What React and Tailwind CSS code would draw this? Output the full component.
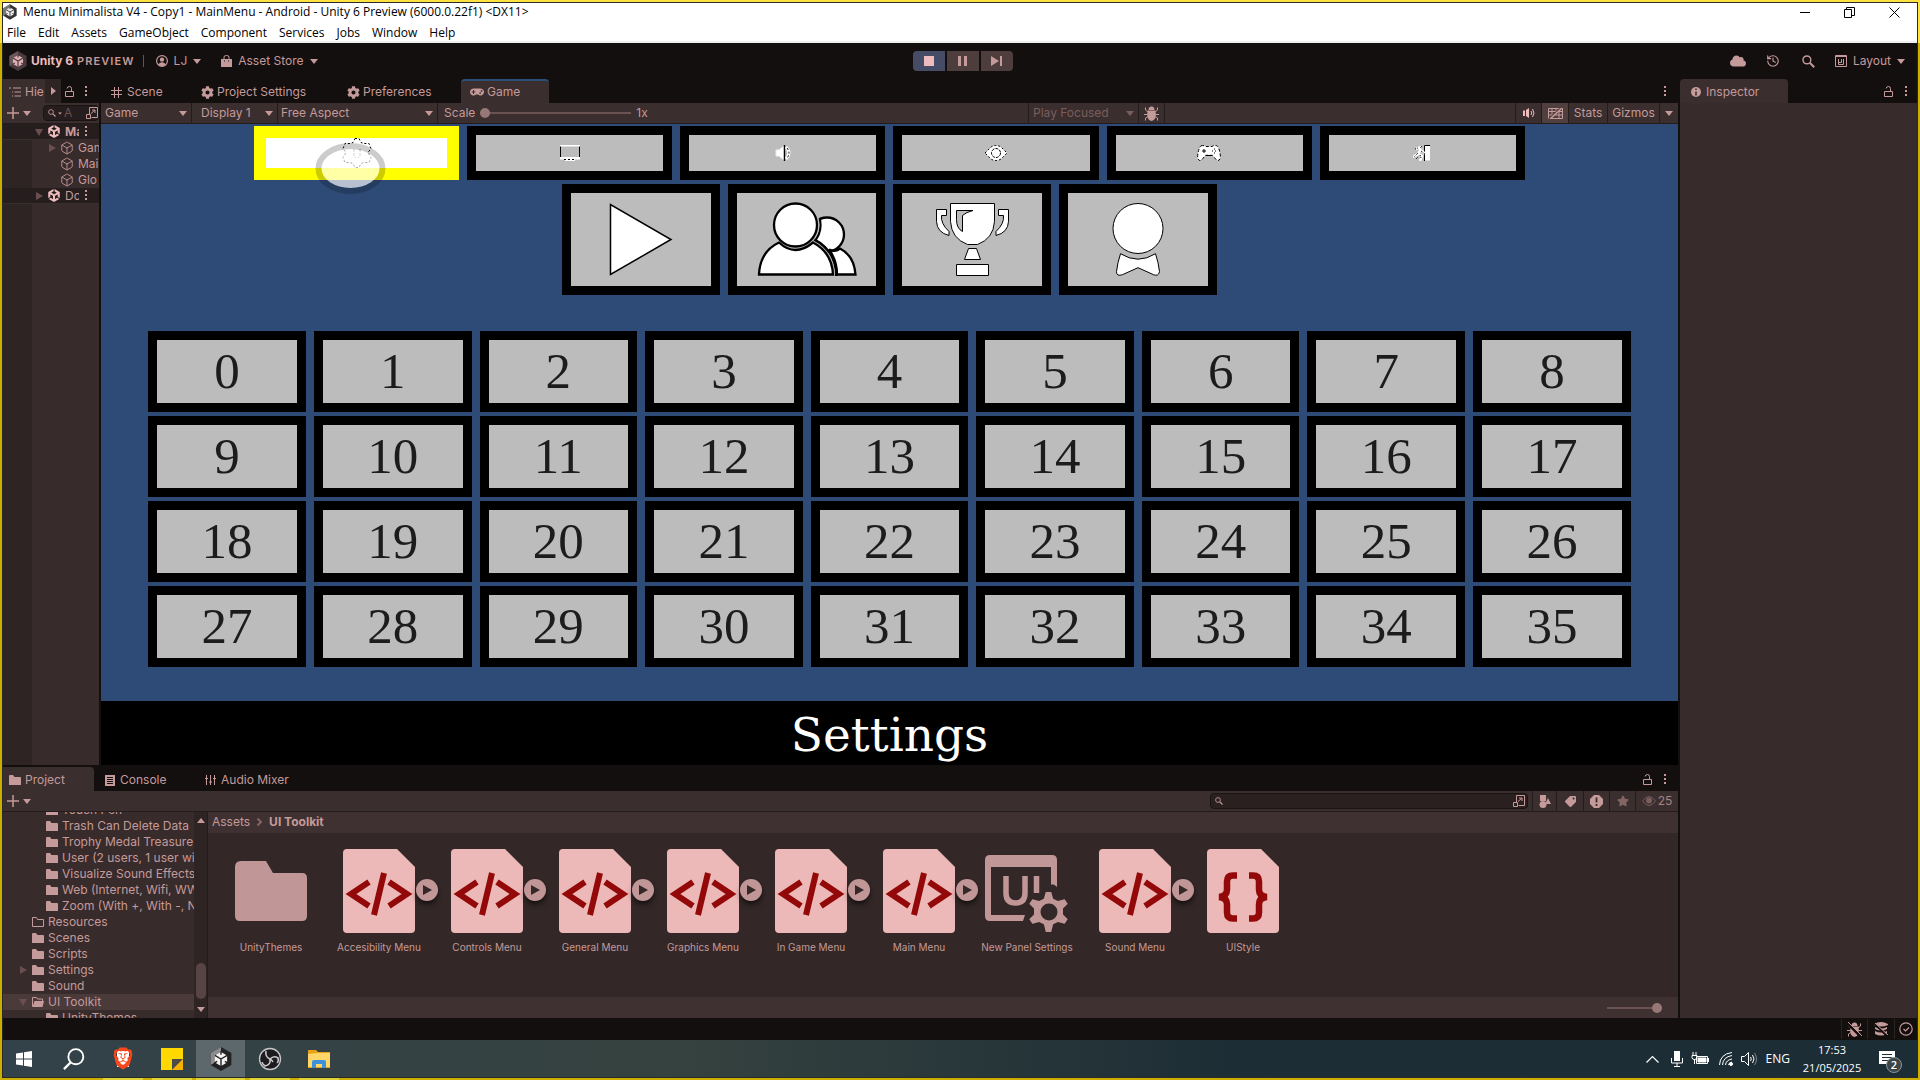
import React from "react";
import { SiBrave, SiUnity } from "react-icons/si";
import { FaCloud, FaCog, FaGamepad, FaStar, FaTag } from "react-icons/fa";
import { Box, History } from "lucide-react";

const menus = ["File", "Edit", "Assets", "GameObject", "Component", "Services", "Jobs", "Window", "Help"];

const folders = [
  { name: "Touch Pen", depth: 2 },
  { name: "Trash Can Delete Data", depth: 2 },
  { name: "Trophy Medal Treasure", depth: 2 },
  { name: "User (2 users, 1 user wi", depth: 2 },
  { name: "Visualize Sound Effects", depth: 2 },
  { name: "Web (Internet, Wifi, WW", depth: 2 },
  { name: "Zoom (With +, With -, N", depth: 2 },
  { name: "Resources", depth: 1, empty: true },
  { name: "Scenes", depth: 1 },
  { name: "Scripts", depth: 1 },
  { name: "Settings", depth: 1, arrow: "right" },
  { name: "Sound", depth: 1 },
  { name: "UI Toolkit", depth: 1, arrow: "down", open: true },
  { name: "UnityThemes", depth: 2 },
];

const assets = [
  { name: "UnityThemes", type: "folder" },
  { name: "Accesibility Menu", type: "uxml" },
  { name: "Controls Menu", type: "uxml" },
  { name: "General Menu", type: "uxml" },
  { name: "Graphics Menu", type: "uxml" },
  { name: "In Game Menu", type: "uxml" },
  { name: "Main Menu", type: "uxml" },
  { name: "New Panel Settings", type: "panel" },
  { name: "Sound Menu", type: "uxml" },
  { name: "UIStyle", type: "uss" },
];

function Caret({ className = "" }) {
  return (
    <svg className={`w-2 h-[5px] shrink-0 ${className}`} viewBox="0 0 8 5" fill="currentColor">
      <path d="M0 0h8L4 5z" />
    </svg>
  );
}

function Kebab() {
  return (
    <svg className="w-[3px] h-[11px] shrink-0" viewBox="0 0 3 11" fill="currentColor">
      <path d="M0 0h2v2H0zM0 4h2v2H0zM0 8h2v2H0z" />
    </svg>
  );
}

function Lock() {
  return (
    <svg className="w-[9px] h-[11px] shrink-0" viewBox="0 0 9 11" fill="none" stroke="currentColor">
      <path d="M.5 5.500h8v5h-8zM6.500 5.500v-3q0-2-2-2t-2.500 2" />
    </svg>
  );
}

function Arrow({ down }) {
  return (
    <svg className="w-2 h-2 shrink-0 text-[#6b4f4f]" viewBox="0 0 8 8" fill="currentColor">
      {down ? <path d="M0 1h8L4 8z" /> : <path d="M1 0l7 4-7 4z" />}
    </svg>
  );
}

function Magnifier({ className }) {
  return (
    <svg className={`shrink-0 ${className}`} viewBox="0 0 12 12" fill="none" stroke="currentColor" strokeWidth="1.300">
      <circle cx="4.500" cy="4.500" r="3.600" />
      <path d="M7.200 7.200L11.300 11.300" strokeWidth="1.800" />
    </svg>
  );
}

function OpenWindow() {
  return (
    <svg className="w-3 h-3 shrink-0" viewBox="0 0 12 12" fill="none" stroke="currentColor">
      <path d="M3.500 7V.5h8v10H5.500M.5 7.500h4v4h-4zM5 6.500L9 3M6 3h3v3" />
    </svg>
  );
}

function FolderIcon({ empty, open }) {
  return (
    <svg className="w-3 h-[10px] shrink-0" viewBox="0 0 12 10">
      {empty ? (
        <path d="M.5 9.500v-9h4l1 2h6v7z" fill="none" stroke="currentColor" />
      ) : open ? (
        <>
          <path d="M.5 9.500v-9h4l1 1.500h5v2" fill="none" stroke="currentColor" />
          <path d="M2.500 4H12l-1.500 6H.5z" fill="currentColor" />
        </>
      ) : (
        <path d="M0 10V1q0-1 1-1h3l1.500 2H11q1 0 1 1v7z" fill="currentColor" />
      )}
    </svg>
  );
}

function PlusMenu() {
  return (
    <button aria-label="Create" className="flex items-center gap-1 pl-1">
      <svg className="w-3 h-3" viewBox="0 0 12 12" stroke="currentColor" strokeWidth="1.500">
        <path d="M6 0v12M0 6h12" />
      </svg>
      <Caret />
    </button>
  );
}

function UnityCube({ className, dark, light, face }) {
  return (
    <svg className={className} viewBox="0 0 20 22">
      <path d="M10 0l9.500 5.500v11L10 22 .5 16.500v-11z" fill={dark} />
      <path d="M10 0L.5 5.500v11L10 11z" fill={light} />
      <path d="M10 4.500l5.600 3.200v6.600L10 17.500l-5.600-3.200V7.700z" fill={face} />
      <path d="M10 11v6.500M10 11L4.400 7.700M10 11l5.600-3.300M10 4v3M4 14.500l2.500-1.400M16 14.500l-2.500-1.400" stroke={dark} strokeWidth="1.300" />
    </svg>
  );
}

function Dropdown({ label, value, className }) {
  return (
    <label className={`relative flex items-center h-full border-r border-[#241c1c] ${className}`}>
      <span className="sr-only">{label}</span>
      <select className="appearance-none w-full h-full bg-transparent outline-none leading-4">
        <option>{value}</option>
      </select>
      <Caret className="absolute right-1 pointer-events-none" />
    </label>
  );
}

function TitleBar() {
  return (
    <header className="bg-white text-black text-xs font-['Open_Sans','Noto_Sans',sans-serif]">
      <div className="h-[18px] flex items-center">
        <UnityCube className="w-[14px] h-4 mr-[6px]" dark="#333333" light="#777777" face="#eeeeee" />
        <span className="flex-1">Menu Minimalista V4 - Copy1 - MainMenu - Android - Unity 6 Preview (6000.0.22f1) &lt;DX11&gt;</span>
        <button aria-label="Minimize" className="w-11 flex justify-center">
          <svg width="10" height="10" stroke="#000"><path d="M0 5.500h10" /></svg>
        </button>
        <button aria-label="Restore" className="w-11 flex justify-center">
          <svg width="11" height="11" fill="none" stroke="#000"><path d="M.5 2.500h7v8h-7zM2.500 2.500v-2h8v8h-3" /></svg>
        </button>
        <button aria-label="Close" className="w-[46px] flex justify-center">
          <svg width="11" height="11" stroke="#000"><path d="M.5.5l10 10M10.500.5l-10 10" /></svg>
        </button>
      </div>
      <nav className="h-[22px] flex items-center gap-3 px-1 pt-1 border-b-2 border-[#f0f0f0]">
        {menus.map((m) => (
          <button key={m}>{m}</button>
        ))}
      </nav>
    </header>
  );
}

function MainToolbar() {
  return (
    <div className="h-9 grid grid-cols-3 items-center pl-[6px] pr-3">
      <div className="flex items-center">
        <UnityCube className="w-[18px] h-5 mr-1" dark="#4a3a40" light="#6a555c" face="#e0b0b2" />
        <span className="font-bold text-[#eebcbc]">Unity 6</span>
        <span className="ml-1 text-[11px] font-semibold tracking-widest">PREVIEW</span>
        <span className="ml-2 w-px h-3 bg-[#6b5252]" />
        <button className="ml-3 flex items-center gap-[6px]">
          <svg className="w-3 h-3" viewBox="0 0 12 12">
            <circle cx="6" cy="6" r="5.400" fill="none" stroke="currentColor" strokeWidth="1.200" />
            <circle cx="6" cy="4.600" r="2.200" fill="currentColor" />
            <path d="M2 9.500q4-4.500 8 0Q6 13 2 9.500z" fill="currentColor" />
          </svg>
          LJ
          <Caret />
        </button>
        <button className="ml-5 flex items-center gap-[6px]">
          <svg className="w-[11px] h-3" viewBox="0 0 11 12">
            <path d="M0 4h11v8H0z" fill="currentColor" />
            <path d="M3 6V2q0-1.500 2.500-1.500T8 2v4" fill="none" stroke="currentColor" />
            <path d="M3 6h1M7 6h1" stroke="#130f0e" />
          </svg>
          Asset Store
          <Caret />
        </button>
      </div>
      <div className="flex justify-center gap-[2px] pl-[11px]">
        <button aria-label="Stop" className="w-8 h-5 rounded-l bg-[#464b66] flex items-center justify-center">
          <span className="w-[10px] h-[10px] bg-[#eebcbc]" />
        </button>
        <button aria-label="Pause" className="w-8 h-5 bg-[#4d3d3d] flex items-center justify-center gap-[3px]">
          <span className="w-[3px] h-[10px] bg-[#c49a9a]" />
          <span className="w-[3px] h-[10px] bg-[#c49a9a]" />
        </button>
        <button aria-label="Step" className="w-8 h-5 rounded-r bg-[#4d3d3d] flex items-center justify-center">
          <svg width="11" height="10" fill="currentColor"><path d="M0 0l8 5-8 5zM9 0h2v10H9z" /></svg>
        </button>
      </div>
      <div className="flex items-center justify-end">
        <button aria-label="Cloud"><FaCloud className="w-4 h-[14px]" /></button>
        <button aria-label="Undo history" className="ml-5"><History size={14} strokeWidth={2} /></button>
        <button aria-label="Search" className="ml-[22px]"><Magnifier className="w-[13px] h-[13px]" /></button>
        <button className="ml-5 flex items-center gap-[6px]">
          <svg className="w-3 h-3" viewBox="0 0 12 12" fill="none" stroke="currentColor">
            <path d="M.5.500h11v11H.5zM.5 1.500h11M3.500 4v5.500h5V4M3.500 7.500h3M6.500 4v3.500" />
          </svg>
          Layout
          <Caret />
        </button>
      </div>
    </div>
  );
}

function UnityRow({ name, down }) {
  return (
    <div className="h-4 flex items-center pl-8 bg-[#261e1e] border-b border-[#3a2d2d]">
      <Arrow down={down} />
      <SiUnity className="w-[14px] h-[13px] ml-1 text-[#eebcbc] shrink-0" />
      <span className={down ? "w-[14px] ml-1 overflow-hidden font-bold" : "w-[14px] ml-1 overflow-hidden"}>{name}</span>
      <span className="ml-[6px]"><Kebab /></span>
    </div>
  );
}

function Hierarchy() {
  return (
    <aside className="w-24 shrink-0 flex flex-col overflow-hidden bg-[#2e2424]">
      <div className="h-6 flex items-center bg-[#130f0e]">
        <div className="h-full w-[42px] bg-[#3b2e2e] flex items-center pl-[6px] pt-[2px] gap-1 overflow-hidden">
          <svg className="w-3 h-[10px] shrink-0" viewBox="0 0 12 10" stroke="currentColor">
            <path d="M0 1h2M4 1h8M3 5h1M5.500 5H12M3 9h1M5.500 9H12" />
          </svg>
          <span>Hie</span>
        </div>
        <button aria-label="Next tab" className="h-full w-4 bg-[#2e2424] flex items-center justify-center">
          <svg width="5" height="8" fill="currentColor"><path d="M0 0l5 4-5 4z" /></svg>
        </button>
        <div className="flex items-center gap-[11px] pl-1"><Lock /><Kebab /></div>
      </div>
      <div className="h-[21px] flex items-center bg-[#3b2e2e] border-b border-[#241c1c]">
        <PlusMenu />
        <label className="ml-3 h-4 w-14 shrink-0 flex items-center rounded bg-[#261e1e] border border-[#1a1414] pl-1">
          <Magnifier className="w-2 h-2" />
          <Caret className="scale-50" />
          <span className="sr-only">Search hierarchy</span>
          <input className="flex-1 min-w-0 bg-transparent outline-none placeholder:text-[#6b5252]" placeholder="A" />
          <OpenWindow />
        </label>
      </div>
      <UnityRow name="Ma" down />
      <ul className="ml-[29px] bg-[#382b2b]">
        {["Gam", "Mai", "Glo"].map((n, i) => (
          <li key={n} className="h-4 flex items-center pl-4 whitespace-nowrap">
            <span className="w-3 shrink-0">{i === 0 && <Arrow />}</span>
            <Box size={14} strokeWidth={1.5} className="mr-1 shrink-0" />
            {n}
          </li>
        ))}
      </ul>
      <UnityRow name="Do" />
      <div className="flex-1 ml-[29px] bg-[#382b2b]" />
    </aside>
  );
}

function PixelIcon({ box, className, children }) {
  return (
    <svg className={className} viewBox={box} fill="#fff" stroke="#000">
      {children}
    </svg>
  );
}

const settingIcons = [
  <PixelIcon key="gear" box="0 0 30 30" className="w-[30px] h-[30px] shrink-0">
    <path
      d="M13 .5h4l2 4 3 1h5l2 5-3 4 3 5-2 5h-5l-3 1-2 4h-4l-2-4-3-1H3l-2-5 3-5-3-4 2-5h5l3-1z"
      strokeDasharray="2 2"
    />
    <path d="M12 11v7l2 2M18 11v7l-2 2" fill="none" stroke="#888" strokeDasharray="3 1" />
  </PixelIcon>,
  <PixelIcon key="display" box="0 0 20 16" className="w-5 h-4">
    <path d="M.5.500h19v13H.5z" fill="#bcbcbc" />
    <path d="M0 0h20v1.500H0zM0 12h20v2.500H0zM5 14h10v2H5z" stroke="none" />
    <path d="M4 14.500h12" strokeDasharray="2 2" />
  </PixelIcon>,
  <PixelIcon key="sound" box="0 0 16 16" className="w-4 h-4">
    <path d="M1 5h3l6-5v16l-6-5H1z" stroke="#eee" />
    <path d="M9.500 0v16" strokeWidth="1.500" />
    <path d="M11 2q6 6 0 12" strokeWidth="3" stroke="#fff" fill="none" />
    <path d="M12 3q4 5 0 10" strokeDasharray="2 2" fill="none" />
  </PixelIcon>,
  <PixelIcon key="eye" box="0 0 24 16" className="w-6 h-4">
    <path d="M1 8l6-6q5-3 10 0l6 6-6 6q-5 3-10 0z" strokeDasharray="2 2" />
    <circle cx="12" cy="8" r="4.500" strokeDasharray="3 1" />
    <circle cx="12" cy="8" r="2.500" stroke="none" />
  </PixelIcon>,
  <PixelIcon key="pad" box="0 0 24 16" className="w-6 h-4">
    <path d="M4 .8q3-.8 5 .7h6q2-1.500 5-.7 3 3 3.500 12-2 5-5 1l-3-3.500h-7l-3 3.500q-3 4-5-1Q1 3.800 4 .8z" strokeDasharray="3 2" />
    <path d="M5 6h4M7 4v4M15 6h1M18 6h1M17 4h1M17 8h1M9 10.500h6" />
  </PixelIcon>,
  <PixelIcon key="exit" box="0 0 18 16" className="w-[18px] h-4">
    <path d="M11 .5h6v15h-6z" stroke="none" />
    <path d="M11.500 16V.5H17" fill="none" />
    <path d="M8 2l-5 2M8 4L5 9l-5 3M6 9l3 2-2 5M8 5l3 3h4" stroke="#fff" strokeWidth="2.500" fill="none" />
    <path d="M9 1l-2 2M2 4l3-1M5 8l-4 4M7 10l1 3M8 6l4 3M3 14l2-2" strokeDasharray="1 1" fill="none" />
  </PixelIcon>,
];

const modeIcons = [
  <PixelIcon key="play" box="588 200 106 80" className="w-[106px] h-20">
    <path d="M610.500 204.500v70L671 239.500z" strokeWidth="1.500" />
  </PixelIcon>,
  <PixelIcon key="users" box="754 200 106 80" className="w-[106px] h-20">
    <clipPath id="behind">
      <circle cx="827" cy="234.500" r="18" />
      <path d="M835 276q0-14-8-25 6 2 11-2 16 7 17 27z" />
    </clipPath>
    <g strokeWidth="2.300">
      <circle cx="827" cy="234.500" r="17" />
      <path d="M837 274.500q0-14-8-25 6 3 11-1 14 7 15.500 26z" />
      <g clipPath="url(#behind)">
        <circle cx="795.500" cy="225" r="25" fill="#bcbcbc" />
        <path d="M759 274.500q1-23 20-32 16 15 34 0 19 10 20 32z" strokeWidth="9" />
      </g>
      <path d="M759 274.500q1-23 20-32 16 15 34 0 19 10 20 32z" stroke="#bcbcbc" strokeWidth="4" />
      <circle cx="795.500" cy="225" r="23.500" fill="#bcbcbc" stroke="#bcbcbc" strokeWidth="1" />
      <path d="M759 274.500q1-23 20-32 16 15 34 0 19 10 20 32z" />
      <circle cx="795.500" cy="225" r="21.500" />
    </g>
  </PixelIcon>,
  <PixelIcon key="trophy" box="919 200 106 80" className="w-[106px] h-20">
    <path d="M950.500 203.500h44v18q-1 17-17 23h-10q-16-6-17-23z" />
    <path d="M956.500 210.500h16.500l-6 2-4.500 3v16q-6-3-6-12z" fill="#bcbcbc" />
    <path d="M936.500 209.500h10v6h-5q-1 8 7.500 16v4q-12-3-12.500-14z" />
    <path d="M1008.500 209.500h-10v6h5q1 8-7.500 16v4q12-3 12.500-14z" />
    <path d="M968.500 248.500h8l4 11h-16zM956.500 264.500h32v11h-32z" />
  </PixelIcon>,
  <PixelIcon key="medal" box="1085 200 106 80" className="w-[106px] h-20">
    <circle cx="1138" cy="228.500" r="25" />
    <path d="M1120.500 253.700q17.500 11 35 0 3 9 4 18-1 5-6 3l-15.500-7-15.500 7q-6 2-6-3 1-9 4-18z" />
  </PixelIcon>,
];

function GameView() {
  return (
    <div className="flex-1 flex flex-col bg-black">
      <div className="flex-1 flex flex-col items-center bg-[#2e4b78] pt-[2px] pb-[34px]">
        <div className="w-[80.6%] grid grid-cols-6 gap-2">
          {settingIcons.map((icon, i) =>
            i === 0 ? (
              <button key={i} aria-label="General" className="relative h-[54px] border-12 border-[#ffff00] bg-white flex items-center justify-center">
                {icon}
                <svg className="absolute left-[49px] top-[5px] w-[71px] h-[51px]" viewBox="0 0 71 51">
                  <ellipse cx="35.500" cy="25.500" rx="29" ry="19.500" fill="#fff" fillOpacity=".65" />
                  <ellipse cx="35.500" cy="25.500" rx="32" ry="22.500" fill="none" stroke="#000" strokeOpacity=".2" strokeWidth="6" />
                </svg>
              </button>
            ) : (
              <button key={i} aria-label={`Setting ${i}`} className="h-[54px] border-9 border-black bg-[#bcbcbc] flex items-center justify-center">
                {icon}
              </button>
            )
          )}
        </div>
        <div className="w-[41.5%] grid grid-cols-4 gap-2 mt-1">
          {modeIcons.map((icon, i) => (
            <button key={i} aria-label={`Mode ${i}`} className="h-[111px] border-9 border-black bg-[#bcbcbc] flex items-center justify-center">
              {icon}
            </button>
          ))}
        </div>
        <div className="w-[94%] grid grid-cols-9 gap-x-2 gap-y-1 mt-9">
          {Array.from({ length: 36 }, (_, i) => (
            <button key={i} className="h-[81px] border-9 border-black bg-[#bcbcbc] text-[#1c1c1c] text-[51px] leading-[63px] font-['Liberation_Serif',serif]">
              {i}
            </button>
          ))}
        </div>
      </div>
      <div className="h-16 text-center text-white text-[47px] leading-[68px] font-['DejaVu_Serif',serif]">Settings</div>
    </div>
  );
}

function Bug({ className }) {
  return (
    <svg className={className} viewBox="0 0 15 15" fill="currentColor">
      <path d="M4.500 4q0-3.500 3-3.500t3 3.500zM3.500 4.500h8q1.500 10-4 10.500Q2 14.500 3.500 4.500z" />
      <path d="M4 6L1.500 4V1.500M11 6l2.500-2V1.500M0 8.500h15M4 10.500l-2.500 1.500v2.500M11 10.500l2.500 1.500v2.500" fill="none" stroke="currentColor" />
    </svg>
  );
}

function Game() {
  return (
    <section className="flex-1 flex flex-col">
      <div className="h-6 flex items-center pr-[11px]">
        <button className="w-[90px] h-full flex items-center gap-[5px] pl-[10px] pt-[2px]">
          <svg className="w-[11px] h-[11px]" viewBox="0 0 11 11" stroke="currentColor"><path d="M3.500 0v11M7.500 0v11M0 3.500h11M0 7.500h11" /></svg>
          Scene
        </button>
        <button className="w-[146px] h-full flex items-center gap-[3px] pl-[10px] pt-[2px]"><FaCog size={13} />Project Settings</button>
        <button className="w-[124px] h-full flex items-center gap-[3px] pl-[10px] pt-[2px]"><FaCog size={13} />Preferences</button>
        <button className="w-[88px] h-full flex items-center gap-[3px] pl-[9px] bg-[#3b2e2e] border-t-2 border-[#2c4f78] rounded-t"><FaGamepad size={14} />Game</button>
        <span className="flex-1" />
        <Kebab />
      </div>
      <div className="h-[21px] flex items-center bg-[#3b2e2e] border-b border-[#241c1c]">
        <Dropdown label="Window" value="Game" className="w-[91px] pl-1" />
        <Dropdown label="Display" value="Display 1" className="w-[86px] pl-[9px]" />
        <Dropdown label="Aspect" value="Free Aspect" className="w-40 pl-[3px]" />
        <label className="flex items-center pl-[6px] gap-[5px]">
          Scale
          <input
            type="range"
            min="1"
            max="5"
            defaultValue="1"
            className="w-[151px] h-[2px] appearance-none bg-[#6b5252] [&::-webkit-slider-thumb]:appearance-none [&::-webkit-slider-thumb]:w-[10px] [&::-webkit-slider-thumb]:h-[10px] [&::-webkit-slider-thumb]:rounded-full [&::-webkit-slider-thumb]:bg-[#987777]"
          />
          1x
        </label>
        <span className="flex-1" />
        <Dropdown label="Play mode" value="Play Focused" className="w-[111px] pl-1 border-l text-[#7a5d5d]" />
        <button aria-label="Debug" className="h-full w-[26px] flex items-center justify-center border-r border-[#241c1c]"><Bug className="w-[15px] h-[15px]" /></button>
        <span className="w-[350px]" />
        <button aria-label="Mute" className="h-full w-[27px] flex items-center justify-center border-x border-[#241c1c] text-[#eebcbc]">
          <svg className="w-3 h-[10px]" viewBox="0 0 12 10" fill="none" stroke="currentColor">
            <path d="M0 2.500h2V8H0zM3 2l3-2v10L3 8z" fill="currentColor" stroke="none" />
            <path d="M8 3q1.500 2 0 4M9.500 1q3 4 0 8" />
          </svg>
        </button>
        <button aria-label="Shortcuts" className="h-full w-[26px] flex items-center justify-center bg-[#4f3f3f]">
          <svg className="w-[15px] h-[11px]" viewBox="0 0 15 11" fill="none" stroke="currentColor">
            <path d="M.5.5h14v10H.5zM.5 3.500h14M.5 7h14M4 .5v10M8 .5v6M11 3.500v7" />
            <path d="M1 11L13 0" stroke="#4f3f3f" strokeWidth="2" />
            <path d="M2 11L14 0" strokeWidth="1.500" />
          </svg>
        </button>
        <button className="h-full w-10 border-x border-[#241c1c]">Stats</button>
        <button className="h-full w-[52px] border-r border-[#241c1c]">Gizmos</button>
        <button aria-label="Gizmo options" className="w-[18px] flex justify-center"><Caret /></button>
      </div>
      <GameView />
    </section>
  );
}

function AssetIcon({ type }) {
  if (type === "folder") {
    return <path d="M6 18q0-6 6-6h25l7 12h29q5 0 5 5v38q0 5-5 5H11q-5 0-5-5z" fill="#c19696" />;
  }
  if (type === "panel") {
    return (
      <g fill="#c19696">
        <path d="M0 11q0-5 5-5h62q5 0 5 5v27q-4-4-6-2V18H6v48h34l-2 6H5q-5 0-5-5z" />
        <path d="M21 27v17q0 10 9.500 10T40 44V27M51.500 27v17" fill="none" stroke="#c19696" strokeWidth="5.500" />
        <path
          d="M60 42h7l2 7 4 2 7-2 4 6-5 5v5l5 5-4 6-7-2-4 2-2 8h-7l-2-8-4-2-7 2-4-6 5-5v-5l-5-5 4-6 7 2 4-2z"
          stroke="#332727"
          strokeWidth="2"
        />
        <circle cx="64" cy="63" r="8.500" fill="#332727" />
      </g>
    );
  }
  return (
    <g>
      <path d="M6 4q0-4 4-4h50l18 18v62q0 4-4 4H10q-4 0-4-4z" fill="#ecb8b8" />
      {type === "uxml" ? (
        <g fill="none" stroke="#930808" strokeWidth="6">
          <path d="M32 33L14 45l18 12M52 33l18 12-18 12" />
          <path d="M47 24L37 66" />
        </g>
      ) : (
        <path
          d="M36 26.500h-4q-6 0-6 6v8q0 7-8 7.500 8 .5 8 7.500v8q0 6 6 6h4M48 26.500h4q6 0 6 6v8q0 7 8 7.500-8 .5-8 7.500v8q0 6-6 6h-4"
          fill="none"
          stroke="#930808"
          strokeWidth="6.500"
        />
      )}
    </g>
  );
}

function Asset({ name, type }) {
  return (
    <li className="w-[108px] flex flex-col items-center pt-4">
      <div className="relative">
        <svg className="w-[84px] h-[84px]" viewBox="0 0 84 84">
          <AssetIcon type={type} />
        </svg>
        {type === "uxml" && (
          <button aria-label={`Expand ${name}`} className="absolute left-[79px] top-[30px] w-[22px] h-[22px] rounded-full bg-[#c19696] shadow-md shadow-black/60 flex items-center justify-center">
            <svg width="10" height="10" fill="#332727"><path d="M1 0l9 5-9 5z" /></svg>
          </button>
        )}
      </div>
      <span className="mt-[7px] text-[10px] leading-[14px] whitespace-nowrap">{name}</span>
    </li>
  );
}

function Project() {
  return (
    <section className="bg-[#130f0e] pt-[2px]">
      <div className="h-6 flex items-center pr-[11px]">
        <button className="w-[91px] h-full flex items-center gap-1 pl-[6px] pt-[2px] bg-[#3b2e2e] rounded-tr"><FolderIcon />Project</button>
        <button className="w-[100px] h-full flex items-center gap-[5px] pl-[11px] pt-[2px]">
          <svg className="w-[10px] h-[11px]" viewBox="0 0 10 11"><path d="M0 0h10v11H0z" fill="currentColor" /><path d="M2 2.500h6M2 4.500h6M2 6.500h6M2 8.500h6" stroke="#130f0e" /></svg>
          Console
        </button>
        <button className="h-full flex items-center gap-[5px] pl-[11px] pt-[2px]">
          <svg className="w-[11px] h-[10px]" viewBox="0 0 11 10" stroke="currentColor"><path d="M1.500 0v10M5.500 0v10M9.500 0v10M0 3.500h3M4 7h3M8 3.500h3" /></svg>
          Audio Mixer
        </button>
        <span className="flex-1" />
        <div className="flex items-center gap-3"><Lock /><Kebab /></div>
      </div>
      <div className="h-[21px] flex items-center bg-[#3b2e2e] border-b border-[#241c1c]">
        <PlusMenu />
        <span className="flex-1" />
        <label className="w-[318px] h-4 flex items-center rounded bg-[#2a2020] border border-[#1a1414] pl-1 pr-[2px] gap-1 mr-1">
          <span className="sr-only">Search assets</span>
          <Magnifier className="w-2 h-2" />
          <input className="flex-1 bg-transparent outline-none" />
          <OpenWindow />
        </label>
        <button aria-label="Filter by type" className="h-full w-[25px] flex items-center justify-center border-x border-[#241c1c]">
          <svg className="w-3 h-[13px]" viewBox="0 0 12 13" fill="currentColor"><path d="M1 0h6v6H1zM9 3l3 6H6z" /><circle cx="4" cy="9.500" r="3.500" /></svg>
        </button>
        <button aria-label="Filter by label" className="h-full w-[27px] flex items-center justify-center border-r border-[#241c1c]"><FaTag size={11} className="-scale-x-100" /></button>
        <button aria-label="Filter by log" className="h-full w-[26px] flex items-center justify-center border-r border-[#241c1c]">
          <svg className="w-[13px] h-[13px]" viewBox="0 0 13 13"><path d="M4 0h5l4 4v5l-4 4H4L0 9V4z" fill="currentColor" /><path d="M6.500 2.500v5M6.500 9v2" stroke="#3b2e2e" strokeWidth="1.800" /></svg>
        </button>
        <button aria-label="Favorites" className="h-full w-[26px] flex items-center justify-center border-r border-[#241c1c] text-[#846565]"><FaStar size={12} /></button>
        <button className="h-full w-[42px] flex items-center justify-center gap-[2px] text-[#a88383]">
          <svg className="w-[14px] h-[10px] text-[#7a5d5d]" viewBox="0 0 14 10"><path d="M.5 5Q7-4 13.500 5 7 14 .5 5z" fill="none" stroke="currentColor" /><circle cx="7" cy="4.500" r="3" fill="currentColor" /></svg>
          25
        </button>
      </div>
      <div className="h-[206px] flex">
        <ul className="w-[191px] overflow-hidden bg-[#382b2b]">
          {folders.map((f, i) => (
            <li
              key={f.name}
              className={`h-4 flex items-center whitespace-nowrap ${i === 0 ? "-mt-[10px]" : ""} ${f.open ? "bg-[#4b3a3a]" : ""} ${f.depth === 2 ? "pl-[43px]" : "pl-4"}`}
            >
              {f.depth === 1 && <span className="w-[13px] shrink-0">{f.arrow && <Arrow down={f.arrow === "down"} />}</span>}
              <FolderIcon empty={f.empty} open={f.open} />
              <span className="ml-1">{f.name}</span>
            </li>
          ))}
        </ul>
        <div className="w-[14px] bg-[#2e2424] border-r border-[#241c1c] flex flex-col items-center py-[6px]">
          <Caret className="rotate-180" />
          <span className="flex-1" />
          <span className="w-[10px] h-9 rounded-full bg-[#584444] mb-2" />
          <Caret />
        </div>
        <div className="flex-1 flex flex-col bg-[#332727]">
          <div className="h-[21px] flex items-center gap-[7px] pl-1 pb-px bg-[#3f3131]">
            <a href="#assets">Assets</a>
            <svg width="5" height="8" fill="none" stroke="#846565" strokeWidth="2"><path d="M.5.500L4 4 .5 7.500" /></svg>
            <a href="#toolkit" className="font-bold">UI Toolkit</a>
          </div>
          <ul className="flex-1 flex pl-[9px]">
            {assets.map((a) => (
              <Asset key={a.name} name={a.name} type={a.type} />
            ))}
          </ul>
          <div className="h-[21px] flex items-center justify-end pr-4 bg-[#3f3131]">
            <input
              type="range"
              aria-label="Icon size"
              defaultValue="100"
              className="w-[55px] h-[2px] appearance-none bg-[#6b5252] [&::-webkit-slider-thumb]:appearance-none [&::-webkit-slider-thumb]:w-[10px] [&::-webkit-slider-thumb]:h-[10px] [&::-webkit-slider-thumb]:rounded-full [&::-webkit-slider-thumb]:bg-[#987777]"
            />
          </div>
        </div>
      </div>
    </section>
  );
}

function Inspector() {
  return (
    <aside className="w-[237px] shrink-0 flex flex-col bg-[#382b2b]">
      <div className="h-6 flex items-center pr-[9px] bg-[#130f0e]">
        <button className="w-[108px] h-full flex items-center gap-[5px] pl-[11px] pt-[2px] bg-[#3b2e2e] rounded-t">
          <svg className="w-[10px] h-[10px]" viewBox="0 0 10 10"><circle cx="5" cy="5" r="5" fill="currentColor" /><path d="M5 4.500v4M5 1.500v1.500" stroke="#3b2e2e" strokeWidth="1.500" /></svg>
          Inspector
        </button>
        <span className="flex-1" />
        <div className="flex items-center gap-3"><Lock /><Kebab /></div>
      </div>
    </aside>
  );
}

function StatusBar() {
  return (
    <footer className="h-[22px] flex items-center justify-end">
      <button aria-label="Debugger" className="h-5 w-[26px] flex items-center justify-center border-l border-[#2a2121]">
        <svg className="w-[15px] h-[15px]" viewBox="0 0 15 15">
          <Bug />
          <path d="M0 1l14 14" stroke="#130f0e" strokeWidth="2.500" />
          <path d="M1 0l14 14" stroke="currentColor" />
        </svg>
      </button>
      <button aria-label="Cache server" className="h-5 w-7 flex items-center justify-center border-x border-[#2a2121]">
        <svg className="w-[14px] h-[14px]" viewBox="0 0 14 14" fill="currentColor">
          <path d="M0 2q7-4 14 0v1q-7 3-14 0zM1 5q6 3 12 0v2q-6 3-12 0zM1 9q6 3 12 0v3q-6 3-12 0z" />
          <path d="M0 1l13 13" stroke="#130f0e" strokeWidth="2" />
          <path d="M1 1l13 12" stroke="currentColor" />
        </svg>
      </button>
      <button aria-label="Progress" className="w-[22px] flex items-center justify-center">
        <svg className="w-[14px] h-[14px]" viewBox="0 0 14 14" fill="none" stroke="currentColor" strokeWidth="1.200"><circle cx="7" cy="7" r="6.200" /><path d="M4.500 7l2 2 3.500-3.500" /></svg>
      </button>
    </footer>
  );
}

function TaskButton({ label, active, running, width = "w-[49px]", children }) {
  return (
    <button aria-label={label} className={`relative h-full flex items-center justify-center ${width} ${active ? "bg-[#5c686c]" : ""}`}>
      {children}
      {running && <span className={`absolute -bottom-[3px] h-[2px] bg-[#e0d335] ${active ? "w-full" : "w-10"}`} />}
    </button>
  );
}

function Taskbar() {
  return (
    <div className="h-[37px] flex items-center text-white bg-linear-to-r from-[#33424a] via-[#35423f] via-35% to-[#1d2d35] to-65% font-['Open_Sans','Noto_Sans',sans-serif]">
      <TaskButton label="Start" width="w-[46px] pr-1">
        <svg width="16" height="16" fill="#fff"><path d="M0 2.500l7-1v6H0zM8 1.300L16 0v7.500H8zM0 8.500h7v6l-7-1zM8 8.500h8V16l-8-1.200z" /></svg>
      </TaskButton>
      <TaskButton label="Search">
        <svg width="22" height="22" viewBox="0 0 24 24" fill="none" stroke="#fff" strokeWidth="2"><circle cx="14" cy="9.500" r="8.200" /><path d="M8.500 15.500L1 23" strokeWidth="2.500" /></svg>
      </TaskButton>
      <TaskButton label="Brave" running>
        <span className="relative flex items-center justify-center">
          <span className="absolute w-3 h-4 bg-white" />
          <SiBrave className="relative w-[22px] h-[23px] text-[#f8481c]" />
        </span>
      </TaskButton>
      <TaskButton label="Sticky Notes" running>
        <svg width="22" height="22"><path d="M0 0h22v11L11 22H0z" fill="#ffd800" /><path d="M11 11h11L11 22z" fill="#4a4a4a" /><path d="M22 11v11H11z" fill="#f5b000" /></svg>
      </TaskButton>
      <TaskButton label="Unity" active running>
        <UnityCube className="w-[22px] h-6" dark="#222222" light="#8c8c8c" face="#f4f4f4" />
      </TaskButton>
      <TaskButton label="OBS" running>
        <svg width="24" height="24" viewBox="0 0 24 24">
          <circle cx="12" cy="12" r="10.500" fill="#1d1a20" stroke="#c8c8c8" strokeWidth="1.300" />
          <path d="M12 12q-5-2-4-8M12 12q4-4 8-1 1 3-1 5M12 12q1 6-5 7-3-2-3-4M12 12q2 1 3 3" fill="none" stroke="#c8c8c8" strokeWidth="1.600" />
        </svg>
      </TaskButton>
      <TaskButton label="Explorer" running>
        <svg width="22" height="18"><path d="M0 0h8l2 2h12v16H0z" fill="#e8a317" /><path d="M0 4l9-1h13v14H0z" fill="#ffd667" /><path d="M4 18v-6q0-2 2-2h10q2 0 2 2v6h-4v-4H8v4z" fill="#3c91dc" /></svg>
      </TaskButton>
      <span className="flex-1" />
      <div className="flex items-center text-xs leading-[18px]">
        <svg width="13" height="8" fill="none" stroke="#fff" strokeWidth="1.200"><path d="M.5 7.500l6-6 6 6" /></svg>
        <svg className="ml-3" width="12" height="17"><path d="M3 1h6v10H3z" fill="#fff" /><path d="M.5 8v5h11V8M6 13v3.500M3 16.500h6" fill="none" stroke="#fff" /></svg>
        <svg className="ml-2" width="18" height="14" fill="none" stroke="#fff"><path d="M5.500 4.500h11v7h-11zM17.500 6v4M2 0v3M5 0v3M1 3.500h5v2q0 2-2.500 2T1 5.500zM3.500 7v5" /><path d="M7 6h8v4H7z" fill="#fff" /></svg>
        <svg className="ml-[10px]" width="14" height="14" fill="none" stroke="#fff"><path d="M.5 13Q1 2 13 .5M3.500 13Q4 5 13 3.500M6.500 13Q7 8 13 7M9.500 13q0-2 3.500-3" /><circle cx="12" cy="12" r="1.500" fill="#fff" /></svg>
        <svg className="ml-2" width="17" height="14" fill="none" stroke="#fff"><path d="M.5 4.500h3l4-4v13l-4-4h-3zM9.500 5q1.500 2 0 4M11.500 3q3 4 0 8" /><path d="M13.500 1q4 6 0 12" stroke="#7d8689" /></svg>
        <span className="ml-2">ENG</span>
        <div className="ml-3 w-[60px] text-[11px] text-center">
          <div>17:53</div>
          <div>21/05/2025</div>
        </div>
        <button aria-label="Notifications" className="relative ml-[17px] mr-[15px]">
          <svg width="23" height="20" fill="#fff"><path d="M0 2h16v13h-5l-3 3v-3H0z" /><path d="M3 5.500h10M3 8.500h10M3 11.500h7" stroke="#1d2d35" /></svg>
          <span className="absolute left-[7px] top-2 w-4 h-4 rounded-full bg-[#3c4649] border border-[#8d9699] text-[11px] leading-[14px] text-center font-semibold">2</span>
        </button>
      </div>
    </div>
  );
}

export default function App() {
  return (
    <div className="min-h-screen flex flex-col p-[2px] bg-[linear-gradient(to_bottom,#ffe13f_43px,#cbae00_43px)] text-xs text-[#c49a9a] font-['Inter',sans-serif]">
      <div className="flex-1 flex flex-col border border-[#2a2a2a] bg-[#130f0e]">
        <TitleBar />
        <MainToolbar />
        <main className="flex-1 flex gap-[2px]">
          <div className="flex-1 min-w-0 flex flex-col">
            <div className="flex-1 flex gap-[2px]">
              <Hierarchy />
              <Game />
            </div>
            <Project />
          </div>
          <Inspector />
        </main>
        <StatusBar />
        <Taskbar />
      </div>
    </div>
  );
}
